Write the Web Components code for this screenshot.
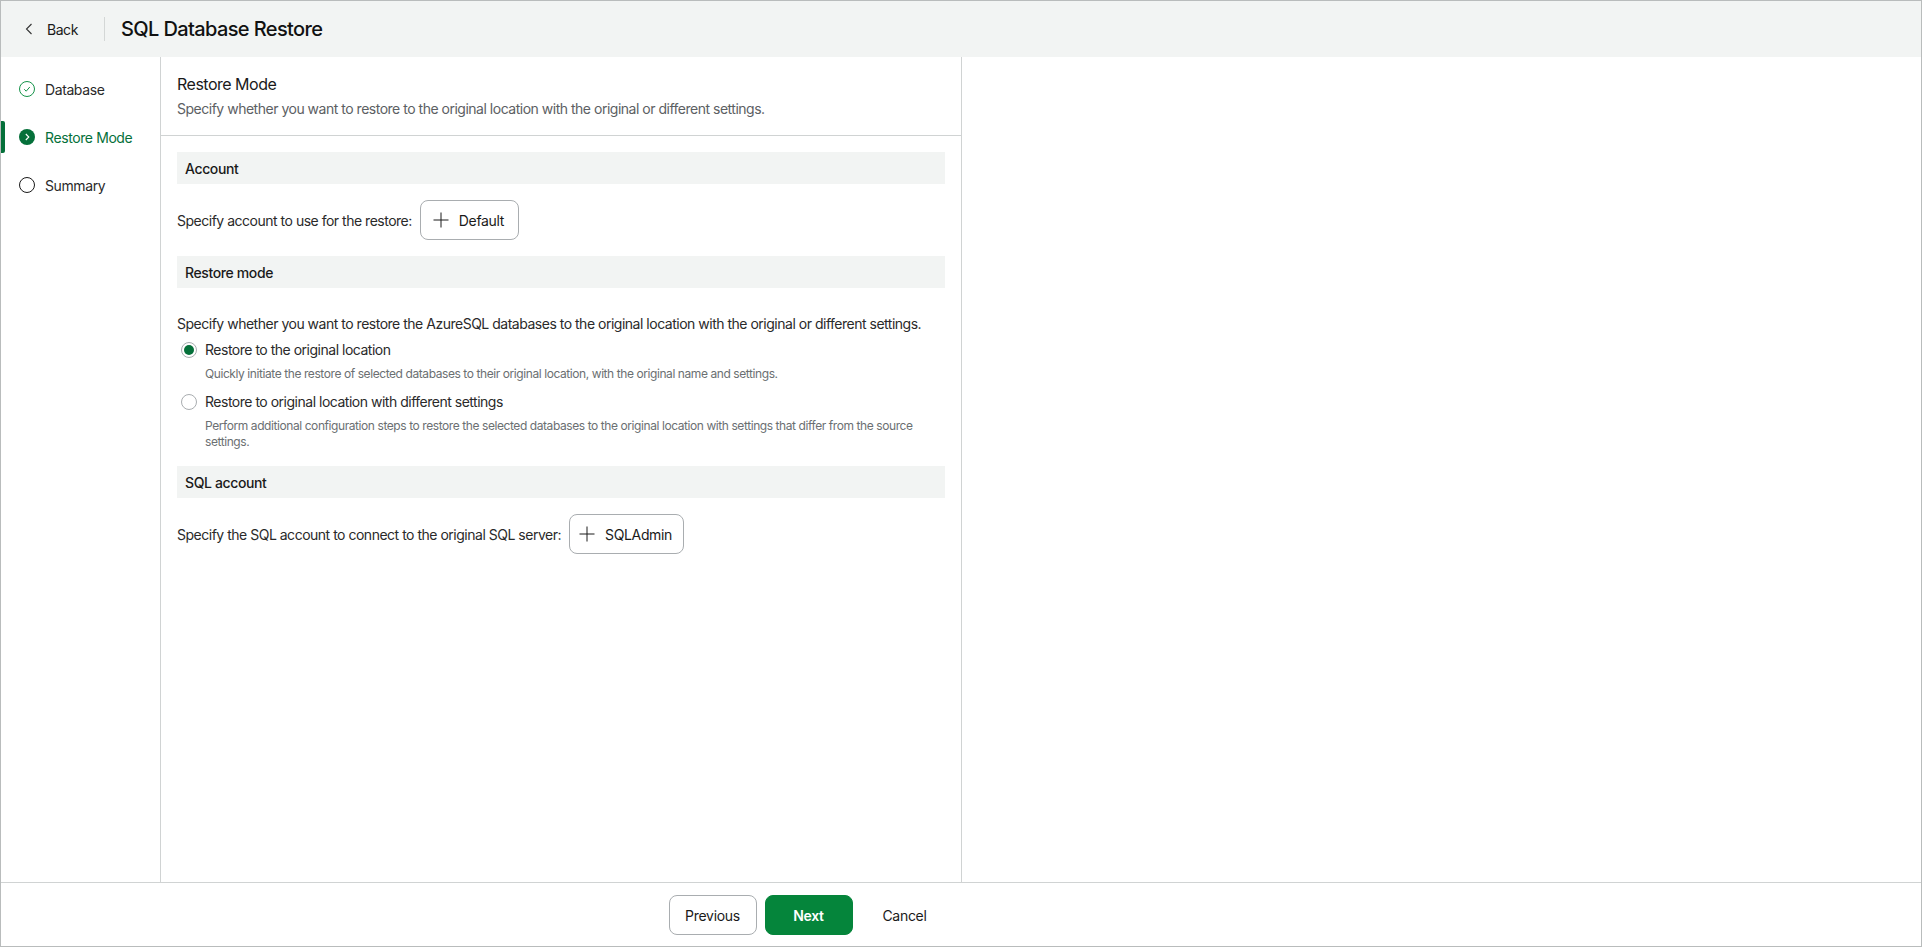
<!DOCTYPE html>
<html><head><meta charset="utf-8"><style>
html,body{margin:0;height:100%;}
body{font-family:Inter,"Liberation Sans",sans-serif;font-size:14px;letter-spacing:-.49px;color:#1a1a1a;background:#fff;overflow:hidden;}
</style></head><body>
<wizard-app>
  <wizard-step slot="steps" state="done">Database</wizard-step>
  <wizard-step slot="steps" state="current">Restore Mode</wizard-step>
  <wizard-step slot="steps" state="todo">Summary</wizard-step>

  <page-head slot="head" heading="Restore Mode">Specify whether you want to restore to the original location with the original or different settings.</page-head>

  <section-bar>Account</section-bar>
  <field-row>Specify account to use for the restore:<add-button style="--pl:12px;--pr:14px">Default</add-button></field-row>
  <section-bar>Restore mode</section-bar>
  <p-text>Specify whether you want to restore the AzureSQL databases to the original location with the original or different settings.</p-text>
  <radio-opt checked label="Restore to the original location">Quickly initiate the restore of selected databases to their original location, with the original name and settings.</radio-opt>
  <radio-opt label="Restore to original location with different settings">Perform additional configuration steps to restore the selected databases to the original location with settings that differ from the source settings.</radio-opt>
  <section-bar>SQL account</section-bar>
  <field-row>Specify the SQL account to connect to the original SQL server:<add-button style="--pl:9px;--pr:11px">SQLAdmin</add-button></field-row>

  <foot-button slot="foot">Previous</foot-button>
  <foot-button slot="foot" kind="primary">Next</foot-button>
  <foot-button slot="foot" kind="plain">Cancel</foot-button>
</wizard-app>
<script>
function def(name, html, setup){
  customElements.define(name, class extends HTMLElement{
    constructor(){super();this.attachShadow({mode:'open'});}
    connectedCallback(){this.shadowRoot.innerHTML=typeof html==='function'?html(this):html;}
  });
}
def('wizard-app',`<style>
:host{display:flex;flex-direction:column;box-sizing:border-box;width:1922px;height:947px;border:1px solid #b9bcbc;}
.top{flex:none;height:56px;background:#f2f4f3;display:flex;align-items:center;}
.back{display:flex;align-items:center;width:103px;box-sizing:border-box;padding-left:21px;gap:11px;color:#1a1a1a;letter-spacing:-.45px;}
.sep{width:1px;height:24px;background:#d4d7d6;}
h1{font-size:20px;font-weight:500;margin:0 0 0 16px;color:#111;letter-spacing:-.62px;}
.mid{flex:1;display:flex;min-height:0;}
.side{flex:none;width:159px;border-right:1px solid #d0d3d3;padding-top:8px;}
.main{flex:none;width:800px;border-right:1px solid #d0d3d3;display:flex;flex-direction:column;}
.body{padding:16px 16px 0;display:flex;flex-direction:column;}
.foot{flex:none;height:62px;padding-top:1px;border-top:1px solid #d0d3d3;display:flex;justify-content:center;align-items:center;gap:8px;padding-right:305px;}
</style>
<div class="top"><div class="back"><svg width="14" height="14" viewBox="0 0 14 14" fill="none" stroke="#333" stroke-width="1.1"><path d="M9.5 2 4.5 7l5 5"/></svg><span>Back</span></div><div class="sep"></div><h1>SQL Database Restore</h1></div>
<div class="mid"><div class="side"><slot name="steps"></slot></div><div class="main"><slot name="head"></slot><div class="body"><slot></slot></div></div></div>
<div class="foot"><slot name="foot"></slot></div>`);
def('wizard-step',h=>{
  const s=h.getAttribute('state');
  const ic={done:`<svg width="16" height="16" viewBox="0 0 16 16" fill="none"><circle cx="8" cy="8" r="7.5" stroke="#16934a"/><path d="M5.2 8.2 7.2 10.2 10.8 6" stroke="#16934a"/></svg>`,
  current:`<svg width="16" height="16" viewBox="0 0 16 16" fill="none"><circle cx="8" cy="8" r="8" fill="#05703a"/><path d="M6.8 5 9.8 8l-3 3" stroke="#fff" stroke-width="1.1"/></svg>`,
  todo:`<svg width="16" height="16" viewBox="0 0 16 16" fill="none"><circle cx="8" cy="8" r="7.5" stroke="#1a1a1a"/></svg>`}[s];
  return `<style>:host{display:flex;align-items:center;height:48px;gap:10px;padding-left:18px;position:relative;letter-spacing:-.4px;color:${s==='current'?'#05703a':'#2a2a2a'};}
  .bar{position:absolute;left:0;top:8px;width:4px;height:32px;background:#05703a;border-radius:0 2px 2px 0;}</style>${s==='current'?'<div class="bar"></div>':''}${ic}<span><slot></slot></span>`;
});
def('page-head',h=>`<style>:host{display:block;box-sizing:border-box;height:79px;padding:17px 16px 0;border-bottom:1px solid #d0d3d3;}
.h{font-size:16px;line-height:20px;color:#1a1a1a;letter-spacing:-.5px;}.d{margin-top:5px;line-height:20px;color:#5c6063;}</style>
<div class="h">${h.getAttribute('heading')}</div><div class="d"><slot></slot></div>`);
def('section-bar',`<style>:host{display:flex;align-items:center;height:32px;padding-left:8px;background:#f2f4f3;font-weight:500;color:#1a1a1a;letter-spacing:-.38px;}</style><slot></slot>`);
def('field-row',`<style>:host{display:flex;align-items:center;gap:8px;height:40px;margin:16px 0;color:#2a2a2a;}</style><slot></slot>`);
def('add-button',`<style>:host{display:inline-flex;align-items:center;box-sizing:border-box;height:40px;padding:0 var(--pr) 0 var(--pl);gap:10px;border:1px solid #a9adb0;border-radius:8px;color:#1a1a1a;background:#fff;letter-spacing:-.35px;}</style>
<svg width="16" height="16" viewBox="0 0 16 16" fill="none" stroke="#1a1a1a"><path d="M8 .5v15M.5 8h15"/></svg><span><slot></slot></span>`);
def('p-text',`<style>:host{display:block;line-height:20px;margin-top:26px;color:#2a2a2a;}</style><slot></slot>`);
def('radio-opt',h=>{
  const c=h.hasAttribute('checked');
  return `<style>:host{display:grid;grid-template-columns:16px 1fr;column-gap:8px;padding-left:4px;margin-bottom:4px;}
  :host(:last-of-type){margin-bottom:16px;}
  .r{align-self:center;width:16px;height:16px;box-sizing:border-box;border:1px solid #a9adb0;border-radius:50%;background:#fff;display:flex;align-items:center;justify-content:center;}
  .r i{width:10px;height:10px;border-radius:50%;background:#05703a;}
  .l{line-height:20px;color:#2a2a2a;margin-top:6px;}
  .rc{margin-top:6px;}
  .d{grid-column:2;font-size:12px;line-height:16px;color:#6b6f72;margin:6px 0 0;letter-spacing:-.42px;}</style>
  <div class="r rc">${c?'<i></i>':''}</div><div class="l">${h.getAttribute('label')}</div><div class="d"><slot></slot></div>`;
});
def('foot-button',h=>{
  const k=h.getAttribute('kind');
  const st=k==='primary'?'background:#05853b;color:#fff;font-weight:600;border:1px solid #05853b;':k==='plain'?'background:none;border:1px solid transparent;color:#1a1a1a;':'background:#fff;border:1px solid #a9adb0;color:#1a1a1a;';
  return `<style>:host{display:inline-flex;align-items:center;justify-content:center;box-sizing:border-box;width:88px;height:40px;border-radius:8px;letter-spacing:-.3px;${st}}</style><slot></slot>`;
});
</script>
</body></html>
